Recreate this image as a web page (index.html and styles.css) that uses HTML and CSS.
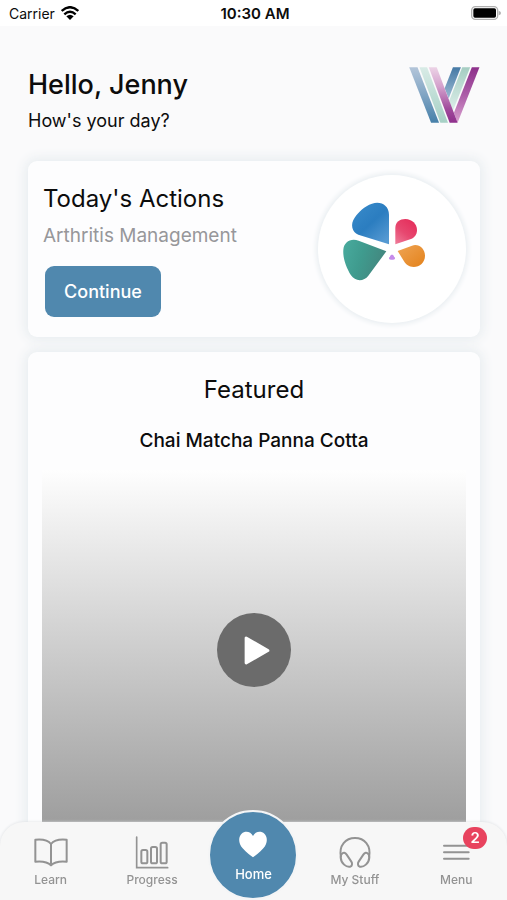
FILE: index.html
```html
<!DOCTYPE html>
<html lang="en">
<head>
<meta charset="utf-8">
<meta name="viewport" content="width=device-width, initial-scale=1">
<title>Home</title>
<link rel="stylesheet" href="styles.css">
</head>
<body>
<div class="status">
  <div class="status-left">
    <span>Carrier</span>
    <svg class="wifi" viewBox="0 0 54 42" aria-hidden="true">
      <g fill="none" stroke="#000" stroke-width="7">
        <path d="M2 15Q27-8 52 15"/>
        <path d="M10 25Q27 9 44 25"/>
      </g>
      <path d="M16 31Q27 22 38 31L27 42Z"/>
    </svg>
  </div>
  <time class="status-time">10:30 AM</time>
  <svg class="battery" viewBox="0 0 90 42" aria-hidden="true">
    <rect x="2" y="2" width="78" height="38" rx="11" fill="#fff" stroke="#b0b0b0" stroke-width="4"/>
    <rect x="7" y="7" width="68" height="28" rx="5"/>
    <path d="M83 14Q90 16 90 21T83 28Z" fill="#b0b0b0"/>
  </svg>
</div>

<main class="page">
  <header class="greeting">
    <div>
      <h1 class="hello">Hello, Jenny</h1>
      <p class="ask">How's your day?</p>
    </div>
    <svg class="logo" viewBox="28 36 213 169" role="img" aria-label="W logo">
      <defs>
        <linearGradient id="lb" x1="0" y1="0" x2="0" y2="1"><stop offset="0" stop-color="#b3c5d9"/><stop offset=".45" stop-color="#86a8c6"/><stop offset="1" stop-color="#4680a9"/></linearGradient>
        <linearGradient id="lg" x1="0" y1="0" x2="0" y2="1"><stop offset="0" stop-color="#d8ebe6"/><stop offset="1" stop-color="#a6d0c5"/></linearGradient>
        <linearGradient id="lp" x1="0" y1="0" x2="0" y2="1"><stop offset="0" stop-color="#ecd3e6"/><stop offset=".35" stop-color="#d3a0cc"/><stop offset=".75" stop-color="#a04b9c"/><stop offset="1" stop-color="#8f2f8c"/></linearGradient>
        <linearGradient id="rb" x1="0" y1="0" x2="0" y2="1"><stop offset="0" stop-color="#4579a5"/><stop offset="1" stop-color="#9ab9d2"/></linearGradient>
        <linearGradient id="rg" x1="0" y1="0" x2="0" y2="1"><stop offset="0" stop-color="#a5cdc2"/><stop offset="1" stop-color="#dceee9"/></linearGradient>
        <linearGradient id="rp" x1="0" y1="0" x2="0" y2="1"><stop offset="0" stop-color="#8d308b"/><stop offset=".5" stop-color="#ac5da8"/><stop offset="1" stop-color="#d9a0cf"/></linearGradient>
      </defs>
      <path fill="url(#rb)" d="M160 37H184L147 131L135 100Z"/>
      <path fill="url(#rg)" d="M188 37H212L160 168L149 137Z"/>
      <path fill="url(#rp)" d="M217 37H240L174 204L163 174Z"/>
      <path fill="url(#lb)" d="M28 37H53L118 204H94Z"/>
      <path fill="url(#lg)" d="M59 37H82L145 204H122Z"/>
      <path fill="url(#lp)" d="M87 37H111L174 204H150Z"/>
    </svg>
  </header>

  <section class="card actions">
    <div class="actions-text">
      <h2 class="title">Today's Actions</h2>
      <p class="program">Arthritis Management</p>
      <button class="continue" type="button">Continue</button>
    </div>
    <div class="badge-circle">
      <svg viewBox="0 0 444 444" role="img" aria-label="Progress petals">
        <defs>
          <linearGradient id="pb" x1="0" y1="0" x2=".8" y2="1"><stop offset="0" stop-color="#3a8ccb"/><stop offset=".55" stop-color="#2b7dc0"/><stop offset="1" stop-color="#5599d2"/></linearGradient>
          <linearGradient id="pg" x1="0" y1="0" x2="1" y2=".3"><stop offset="0" stop-color="#49ab9e"/><stop offset=".5" stop-color="#3f9b8e"/><stop offset="1" stop-color="#43877f"/></linearGradient>
          <linearGradient id="pr" x1=".7" y1="0" x2="0" y2="1"><stop offset="0" stop-color="#e52f5c"/><stop offset=".5" stop-color="#e74870"/><stop offset="1" stop-color="#ef7e9b"/></linearGradient>
          <linearGradient id="po" x1="0" y1="0" x2="1" y2="1"><stop offset="0" stop-color="#efa454"/><stop offset="1" stop-color="#e3821b"/></linearGradient>
        </defs>
        <g transform="translate(51 60)">
          <path fill="url(#pb)" d="M162 148V59C162 31 137 17 111 26C88 34 71 50 59 68C45 87 51 112 70 119Z"/>
          <path fill="url(#pg)" d="M154 169L71 137C47 128 27 141 25 164C23 191 34 218 48 241C60 260 87 260 100 242Z"/>
          <path fill="url(#pr)" d="M181 148V98C181 82 195 72 211 72C231 72 246 87 246 105C246 119 238 128 228 132Z"/>
          <path fill="url(#po)" d="M188 168L231 152C251 145 270 161 270 182C270 202 254 216 236 216C222 216 213 209 207 199Z"/>
          <path fill="#c58bea" d="M171 179C175 179 177 182 177 185Q181 186 180 191Q178 195 171 194Q164 195 162 191Q161 186 165 185C165 182 167 179 171 179Z"/>
        </g>
      </svg>
    </div>
  </section>

  <section class="card featured">
    <h2 class="title">Featured</h2>
    <h3 class="recipe">Chai Matcha Panna Cotta</h3>
    <div class="video">
      <button class="play" type="button" aria-label="Play video">
        <svg viewBox="0 0 78 88" aria-hidden="true"><path d="M6 6V82L72 44Z" fill="#fff" stroke="#fff" stroke-width="9" stroke-linejoin="round"/></svg>
      </button>
    </div>
  </section>
</main>

<nav class="tabs">
  <a class="tab" href="#learn">
    <svg class="tab-icon" viewBox="0 0 108 108" aria-hidden="true"><g fill="none" stroke="#939393" stroke-width="6" stroke-linejoin="round" stroke-linecap="round"><path d="M54 33C45 21 27 18 7 20V86C27 84 44 87 54 97C64 87 81 84 101 86V20C81 18 63 21 54 33Z"/><path d="M54 33V96"/></g></svg>
    <span>Learn</span>
  </a>
  <a class="tab" href="#progress">
    <svg class="tab-icon" viewBox="0 0 108 108" aria-hidden="true"><g fill="none" stroke="#939393" stroke-width="6" stroke-linecap="round"><path d="M8 12V104H101" stroke-width="5"/><rect x="22" y="51" width="18" height="40" rx="5"/><rect x="51" y="42" width="18" height="49" rx="5"/><rect x="80" y="29" width="18" height="62" rx="5"/></g></svg>
    <span>Progress</span>
  </a>
  <a class="tab home" href="#home" aria-current="page">
    <span class="home-disc">
      <svg class="heart" viewBox="0 0 86 80" aria-hidden="true"><path fill="#fff" d="M43 79C36 74 22 63 12 52C-3 36-2 17 8 7C19-3 36 0 43 14C50 0 67-3 78 7C88 17 89 36 74 52C64 63 50 74 43 79Z"/></svg>
      <span>Home</span>
    </span>
  </a>
  <a class="tab" href="#stuff">
    <svg class="tab-icon" viewBox="0 0 108 108" aria-hidden="true"><g fill="none" stroke="#939393" stroke-width="6" stroke-linejoin="round"><path d="M12 74C4 36 27 15 54 15S104 36 96 74"/><path d="M14 63C19 57 25 59 29 65L43 86C47 92 45 99 40 101C28 104 12 91 11 73Q11 67 14 63Z"/><path d="M94 63C89 57 83 59 79 65L65 86C61 92 63 99 68 101C80 104 96 91 97 73Q97 67 94 63Z"/></g></svg>
    <span>My Stuff</span>
  </a>
  <a class="tab" href="#menu">
    <svg class="tab-icon" viewBox="0 0 108 108" aria-hidden="true"><path d="M18 38H92M18 58H92M18 77H92" fill="none" stroke="#939393" stroke-width="6" stroke-linecap="round"/></svg>
    <span>Menu</span>
    <span class="count">2</span>
  </a>
</nav>
</body>
</html>
```

FILE: styles.css
```css
* {
  box-sizing: border-box;
}

body {
  margin: 0;
  height: 100vh;
  overflow: hidden;
  background: #fafafb;
  color: #0c0c0c;
  font-family: Inter, Roboto, sans-serif;
}

h1, h2, h3, p {
  margin: 0;
  font-weight: 400;
}

svg {
  display: block;
}

.status {
  display: grid;
  grid-template-columns: 1fr auto 1fr;
  align-items: center;
  height: 26px;
  padding: 0 6px 0 9px;
  background: #fff;
  font-size: 14px;
}

.status-left {
  display: flex;
  align-items: center;
  gap: 6px;
}

.wifi {
  width: 18px;
  height: 14px;
}

.status-time {
  font-size: 15px;
  font-weight: 600;
}

.battery {
  width: 30px;
  height: 14px;
  justify-self: end;
}

.page {
  padding: 41px 27px 0 28px;
}

.greeting {
  display: flex;
  justify-content: space-between;
  align-items: flex-start;
  min-height: 94px;
}

.hello {
  font-size: 27px;
  line-height: 36px;
  font-weight: 500;
}

.ask {
  margin-top: 6px;
  font-size: 18px;
  line-height: 24px;
}

.logo {
  width: 71px;
  height: 56px;
}

.card {
  border-radius: 9px;
  background: #fdfdfe;
  box-shadow: 0 0 12px 3px #e8edf0;
  padding: 14px;
}

.actions {
  display: flex;
  justify-content: space-between;
  margin-bottom: 15px;
}

.title {
  font-size: 24px;
  line-height: 34px;
}

.actions-text {
  padding: 7px 0 0 1px;
}

.program {
  margin-top: 8px;
  color: #97979a;
  font-size: 19px;
  line-height: 24px;
}

.continue {
  display: block;
  margin: 18px 0 0 2px;
  width: 116px;
  height: 51px;
  border: 0;
  border-radius: 9px;
  background: #5088ae;
  color: #fff;
  font: 500 18px Inter, Roboto, sans-serif;
  padding: 0;
}

.badge-circle {
  width: 148px;
  height: 148px;
  border-radius: 50%;
  background: #fff;
  box-shadow: 0 0 5px 2px #e9eef1;
}

.featured {
  padding-top: 21px;
  text-align: center;
}

.recipe {
  margin-top: 22px;
  font-size: 19px;
  line-height: 24px;
  font-weight: 500;
}

.video {
  display: flex;
  align-items: center;
  justify-content: center;
  height: 360px;
  margin-top: 17px;
  background: linear-gradient(#fefefe, #9c9c9c);
}

.play {
  display: flex;
  align-items: center;
  justify-content: center;
  width: 74px;
  height: 74px;
  border: 0;
  border-radius: 50%;
  background: #6b6b6b;
  padding: 0 0 0 6px;
}

.play svg {
  width: 26px;
  height: 29px;
}

.tabs {
  position: fixed;
  left: 0;
  right: 0;
  bottom: 0;
  display: grid;
  grid-template-columns: repeat(5, 1fr);
  height: 78px;
  border-radius: 24px 24px 0 0;
  background: #f7f7f7;
  box-shadow: 0 0 3px #dadde0;
}

.tab {
  position: relative;
  display: flex;
  flex-direction: column;
  align-items: center;
  padding-top: 11px;
  color: #939393;
  font-size: 12px;
  line-height: 16px;
  font-weight: 500;
  text-decoration: none;
}

.tab-icon {
  width: 36px;
  height: 36px;
  margin-bottom: 3px;
}

.home {
  padding: 0;
  color: #fff;
}

.home-disc {
  display: flex;
  flex-direction: column;
  align-items: center;
  flex: none;
  width: 90px;
  height: 90px;
  margin-top: -12px;
  padding-top: 19px;
  border: 2px solid #f4f5f6;
  border-radius: 50%;
  background: #5088ae;
  font-size: 13px;
}

.heart {
  width: 28px;
  height: 27px;
  margin-bottom: 8px;
}

.count {
  position: absolute;
  top: 5px;
  left: calc(50% + 7px);
  width: 24px;
  height: 22px;
  border-radius: 11px;
  background: #e8435e;
  color: #fff;
  font-size: 15px;
  line-height: 22px;
  font-weight: 600;
  text-align: center;
}
```
